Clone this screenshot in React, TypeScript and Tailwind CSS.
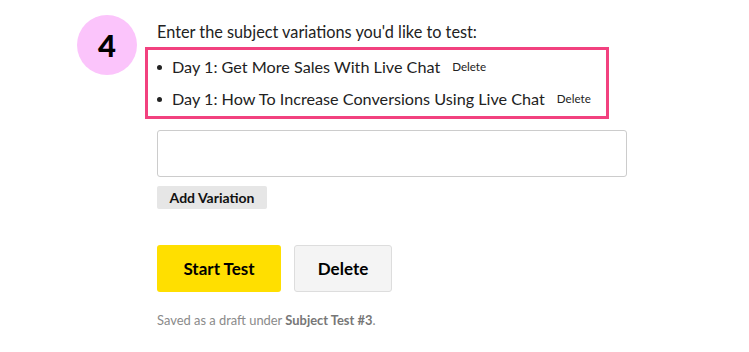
import React from "react";

const items = [
  "Day 1: Get More Sales With Live Chat",
  "Day 1: How To Increase Conversions Using Live Chat",
];

export default function App() {
  return (
    <div
      className="w-[749px] h-[352px] bg-white text-[#1a1a1a] overflow-hidden"
      style={{ fontFamily: "Lato, 'Liberation Sans', sans-serif" }}
    >
      <div className="flex pl-[77px] pt-[15px] gap-[8px]">
        <div className="w-[60px] h-[60px] rounded-full bg-[#fbc4fb] flex items-center justify-center shrink-0">
          <span className="text-[31px] font-black leading-none text-black">4</span>
        </div>
        <div className="flex flex-col">
          <div className="pl-[12px] mt-[7px] text-[16.3px] leading-[20px] text-[#222]">
            Enter the subject variations you'd like to test:
          </div>
          <ul className="mt-[5px] w-[464px] border-[3px] border-[#f2417f] py-px pl-[9px]">
            {items.map((t) => (
              <li key={t} className="h-8 flex items-center">
                <span className="w-[5px] h-[5px] rounded-full bg-[#222] mr-[10px]" />
                <span className="text-[16.2px] text-[#222]">{t}</span>
                <button className="ml-[12px] text-[11.6px] text-[#222]">Delete</button>
              </li>
            ))}
          </ul>
          <div className="pl-[12px] mt-[11px]">
            <input className="block w-[470px] h-[47px] border border-[#cccccc] rounded-[3px] outline-none" />
            <button className="mt-[9px] h-[23px] w-[110px] bg-[#e6e6e6] rounded-[2px] text-[14px] font-bold text-[#111]">
              Add Variation
            </button>
            <div className="mt-[36px] flex gap-[13px]">
              <button className="w-[124px] h-[47px] bg-[#ffdf00] rounded-[3px] text-[17px] font-bold text-black">
                Start Test
              </button>
              <button className="w-[98px] h-[47px] bg-[#f4f4f4] border border-[#dddddd] rounded-[3px] text-[17px] font-bold text-black">
                Delete
              </button>
            </div>
            <div className="mt-[19px] text-[12.9px] text-[#8a8a8a]">
              Saved as a draft under <span className="font-bold text-[#777]">Subject Test #3</span>.
            </div>
          </div>
        </div>
      </div>
    </div>
  );
}
